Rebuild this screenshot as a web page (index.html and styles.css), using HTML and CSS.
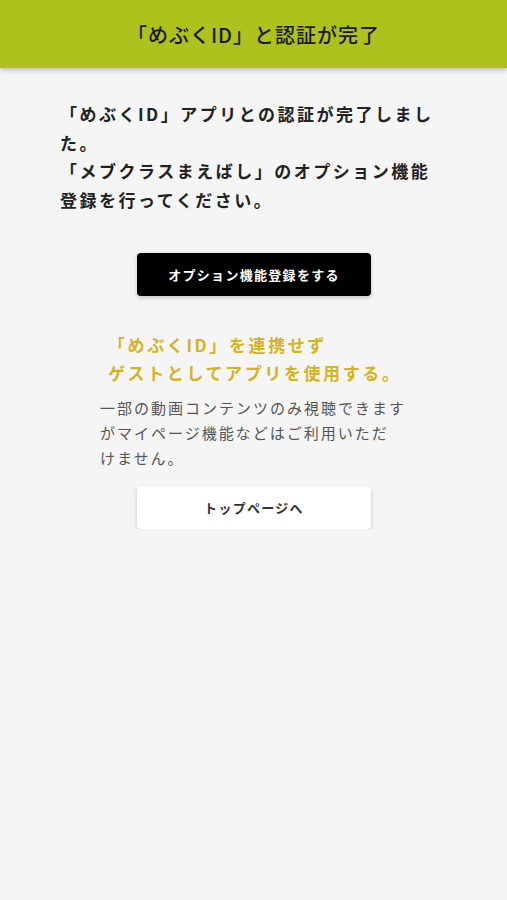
FILE: index.html
```html
<!DOCTYPE html>
<html lang="ja">

<head>
  <meta charset="UTF-8">
  <meta name="viewport" content="width=device-width, initial-scale=1.0">
  <title>認証完了</title>
  <link rel="stylesheet" href="styles.css">
</head>

<body>
  <header class="topbar">
    <h1>「めぶくID」と認証が完了</h1>
  </header>

  <main class="content">
    <p class="lead">「めぶくID」アプリとの認証が完了しました。<br>「メブクラスまえばし」のオプション機能登録を行ってください。</p>

    <div class="actions">
      <a href="#" class="btn btn-dark">オプション機能登録をする</a>
    </div>

    <div class="guest">
      <p class="guest-title">「めぶくID」を連携せず<br>ゲストとしてアプリを使用する。</p>
      <p class="guest-note">一部の動画コンテンツのみ視聴できます<br>がマイページ機能などはご利用いただ<br>けません。</p>
    </div>

    <div class="actions">
      <a href="#" class="btn btn-light">トップページへ</a>
    </div>
  </main>
</body>

</html>
```

FILE: styles.css
```css
html,
body {
  margin: 0;
  padding: 0;
  background: #f5f5f5;
  min-height: 100%;
}

body {
  font-family: "Noto Sans CJK JP", "Noto Sans", sans-serif;
  color: #1f1f1f;
}

.topbar {
  height: 68px;
  background: #adc21c;
  display: flex;
  align-items: center;
  justify-content: center;
  box-shadow: 0 2px 5px rgba(0, 0, 0, .25);
}

.topbar h1 {
  margin: 0;
  font-size: 20px;
  font-weight: 500;
  letter-spacing: 1px;
  color: #1a1a1a;
}

.content {
  padding: 32px 62px 0 60px;
}

.lead {
  margin: 0 0 38px;
  font-size: 17px;
  font-weight: 700;
  line-height: 28.7px;
  letter-spacing: 2.5px;
  color: #222;
}

.actions {
  display: flex;
  justify-content: center;
  padding-left: 3px;
}

.btn {
  display: flex;
  align-items: center;
  justify-content: center;
  width: 234px;
  height: 43px;
  border-radius: 4px;
  font-size: 13px;
  font-weight: 700;
  letter-spacing: 1.3px;
  text-decoration: none;
  box-shadow: 0 2px 4px rgba(0, 0, 0, .2);
}

.btn-dark {
  background: #000;
  color: #fff;
}

.btn-light {
  background: #fff;
  color: #333;
}

.guest {
  padding: 35px 0 0 40px;
}

.guest-title {
  margin: 0 0 8px 8px;
  font-size: 17px;
  font-weight: 700;
  line-height: 28px;
  letter-spacing: 2.6px;
  color: #d5b320;
}

.guest-note {
  margin: 0 0 16px;
  font-size: 15px;
  line-height: 25px;
  letter-spacing: 2px;
  color: #555;
}
```
